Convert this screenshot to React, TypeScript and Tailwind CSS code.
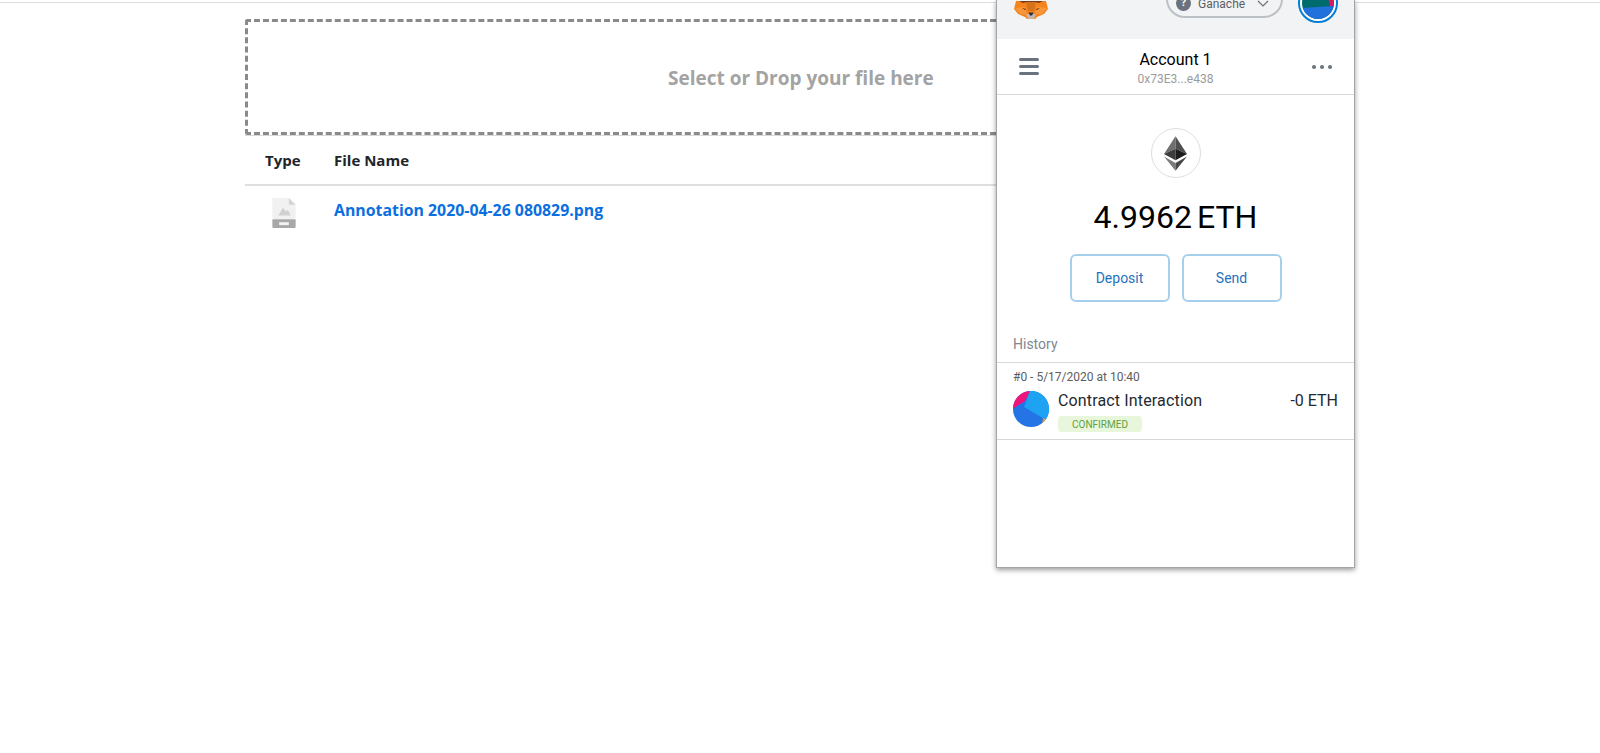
function FoxLogo() {
  return (
    <svg width="36" height="36" viewBox="0 0 36 36">
      <polygon points="3,18 33,18 35,26 31,31 24,34 22,36 14,36 12,34 5,31 1,26" fill="#f5841f" />
      <polygon points="13,19 23,19 21,28 15,28" fill="#d4731b" />
      <polygon points="2,25 12,24 14,31 7,31" fill="#f9963a" />
      <polygon points="34,25 24,24 22,31 29,31" fill="#f9963a" />
      <polygon points="6,18 30,18 26,20 22,19 14,19 10,20" fill="#763d16" />
      <polygon points="9,25 13,26 12,27" fill="#4a2a12" />
      <polygon points="27,25 23,26 24,27" fill="#4a2a12" />
      <polygon points="13,31 23,31 21,36 15,36" fill="#c9b5a6" />
      <polygon points="15.5,29.5 20.5,29.5 19,32.5 17,32.5" fill="#233447" />
    </svg>
  );
}

function EthLogo() {
  return (
    <svg width="23" height="35" viewBox="0 0 24 36">
      <polygon points="12,0 12,13 0,18.5" fill="#6f6f6f" />
      <polygon points="12,0 24,18.5 12,13" fill="#4f4f4f" />
      <polygon points="0,18.5 12,13 12,25" fill="#3c3c3c" />
      <polygon points="24,18.5 12,13 12,25" fill="#1c1c1c" />
      <polygon points="0,21 12,28 12,36" fill="#7c7c7c" />
      <polygon points="24,21 12,28 12,36" fill="#4a4a4a" />
    </svg>
  );
}

function AccountAvatar() {
  return (
    <svg width="36" height="36" viewBox="0 0 36 36" className="rounded-full">
      <rect width="36" height="36" fill="#2474e5" />
      <polygon points="0,0 17,0 12,10 4,15 0,18" fill="#f0147c" />
      <polygon points="17,0 36,0 36,29 30,27 11,16" fill="#1ea3f2" />
      <polygon points="30,27 36,29 36,30 29,34" fill="#c9a13c" />
    </svg>
  );
}

function HeaderAvatar() {
  return (
    <div className="h-10 w-10 rounded-full border-2 border-[#037dd6] bg-white p-[2px]">
      <svg viewBox="0 0 32 32" className="h-full w-full rounded-full">
        <rect width="32" height="32" fill="#006b6f" />
        <polygon points="0,21 32,19 32,32 0,32" fill="#2171dc" />
        <polygon points="26,10 32,4 32,19 28,19" fill="#d81b60" />
      </svg>
    </div>
  );
}

function FileIcon() {
  return (
    <svg width="26" height="31" viewBox="0 0 26 32">
      <polygon points="1,0 18,0 25,7 25,22 1,22" fill="#f1f1f1" />
      <polygon points="18,0 25,7 18,7" fill="#d4d4d4" />
      <polygon points="7,18 12,10 15,14 17,12 20,18" fill="#d0d0d0" />
      <rect x="1" y="22" width="24" height="9" rx="1" fill="#a8a8a8" />
      <rect x="8" y="25" width="10" height="3" fill="#f2f2f2" />
    </svg>
  );
}

export default function App() {
  return (
    <div className="relative h-[753px] w-full overflow-hidden bg-white font-['Open_Sans',sans-serif]">
      <div className="mt-[2px] border-t border-[#dddddd] pt-4">
        <div className="ml-[245px] w-[1110px]">
          <div className="border-b border-[#d8d8d8]">
            <div className="flex h-[116px] items-center rounded-[3px] border-[3px] border-dashed border-[#8a8a8a] pl-[420px] pt-[2px]">
              <span className="text-[19px] font-bold text-[#a3a3a3]">Select or Drop your file here</span>
            </div>
          </div>
          <div className="flex h-[50px] items-center border-b-2 border-[#dfdfdf] pt-[1px] text-[15px] font-bold text-[#212529]">
            <span className="w-[89px] pl-5">Type</span>
            <span>File Name</span>
          </div>
          <div className="flex pt-[12px]">
            <div className="w-[89px] pl-[26px]">
              <FileIcon />
            </div>
            <a className="text-[15.85px] font-bold leading-[25px] text-[#0b6fe0]">Annotation 2020-04-26 080829.png</a>
          </div>
        </div>
      </div>

      {/* extension popup sits over the page */}
      <div className="absolute left-[996px] top-0 h-[568px] w-[359px] overflow-hidden border-x border-b border-[#a5a5a5] bg-white font-['Roboto',sans-serif] shadow-[0_2px_5px_rgba(0,0,0,0.4)]">
        <div className="flex h-[39px] items-end bg-[#f2f3f4]">
          <div className="mb-5 ml-4">
            <FoxLogo />
          </div>
          <div className="mb-[21px] ml-[117px] flex h-[38px] w-[117px] items-center rounded-[20px] border-2 border-[#bbc0c5] pl-2 pt-[9px] text-[12px] text-[#5c5f63]">
            <span className="flex h-[15px] w-[15px] items-center justify-center rounded-full bg-[#6a737d] text-[11px] font-bold text-white">?</span>
            <span className="ml-[7px]">Ganache</span>
            <svg width="12" height="8" viewBox="0 0 12 8" className="ml-auto mr-[12px]">
              <path d="M1 1l5 5 5-5" fill="none" stroke="#6a737d" strokeWidth="1.2" />
            </svg>
          </div>
          <div className="mb-4 ml-[15px]">
            <HeaderAvatar />
          </div>
        </div>

        <div className="flex h-[56px] items-center justify-between border-b border-[#d6d9dc] pl-[22px] pr-[22px]">
          <div className="flex w-[20px] flex-col gap-[4px]">
            <span className="h-[3px] rounded-sm bg-[#6a737d]" />
            <span className="h-[3px] rounded-sm bg-[#6a737d]" />
            <span className="h-[3px] rounded-sm bg-[#6a737d]" />
          </div>
          <div className="flex flex-col items-center pt-[1px]">
            <span className="text-[16px] leading-[22px] text-black">Account 1</span>
            <span className="mt-[1px] text-[12px] leading-[14px] text-[#9b9b9b]">0x73E3...e438</span>
          </div>
          <div className="flex w-[20px] justify-between">
            <span className="h-[4px] w-[4px] rounded-full bg-[#6a737d]" />
            <span className="h-[4px] w-[4px] rounded-full bg-[#6a737d]" />
            <span className="h-[4px] w-[4px] rounded-full bg-[#6a737d]" />
          </div>
        </div>

        <div className="flex flex-col items-center pt-[33px]">
          <div className="flex h-[50px] w-[50px] items-center justify-center rounded-full border border-[#dedede]">
            <EthLogo />
          </div>
          <div className="mt-[17px] flex h-[44px] items-center text-[32px] text-black">
            <span>4.9962</span>
            <span className="ml-[5px]">ETH</span>
          </div>
          <div className="mt-[15px] flex gap-[12px]">
            <button className="h-[48px] w-[100px] rounded-[6px] border-2 border-[#a6cfec] text-[14px] text-[#1f72c0]">Deposit</button>
            <button className="h-[48px] w-[100px] rounded-[6px] border-2 border-[#a6cfec] text-[14px] text-[#1f72c0]">Send</button>
          </div>
        </div>

        <div className="mt-[32px] h-[29px] border-b border-[#d6d9dc] pl-4 text-[14px] leading-[20px] text-[#808890]">History</div>
        <div className="h-[77px] border-b border-[#d6d9dc] pl-4 pr-[16px] pt-[7px]">
          <div className="text-[12px] leading-[14px] text-[#5d5d5d]">#0 - 5/17/2020 at 10:40</div>
          <div className="mt-[7px] flex">
            <AccountAvatar />
            <div className="ml-[9px] flex-1">
              <div className="text-[16px] leading-[20px] tracking-[0.15px] text-[#24292e]">Contract Interaction</div>
              <div className="mt-[5px] flex h-[16px] w-[84px] items-center justify-center rounded-[3px] bg-[#e8f7dc] text-[10px] text-[#5f9f3f]">CONFIRMED</div>
            </div>
            <div className="text-[16px] leading-[20px] text-[#24292e]">-0 ETH</div>
          </div>
        </div>
      </div>
    </div>
  );
}
